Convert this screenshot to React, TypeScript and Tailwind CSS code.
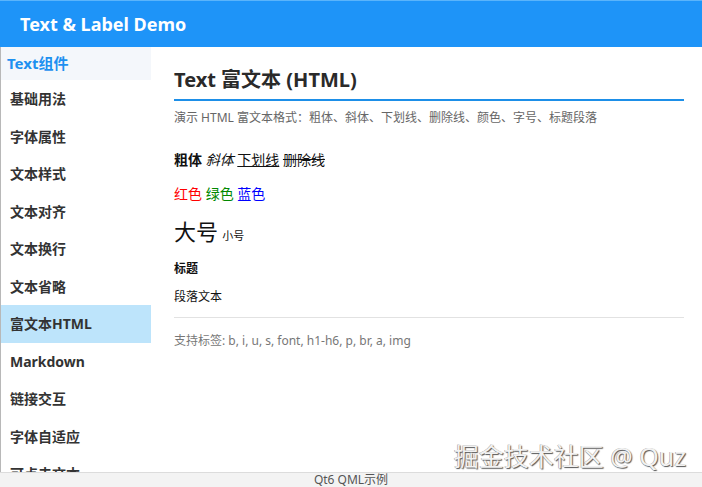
import React from "react";

const items = [
  "基础用法",
  "字体属性",
  "文本样式",
  "文本对齐",
  "文本换行",
  "文本省略",
  "富文本HTML",
  "Markdown",
  "链接交互",
  "字体自适应",
  "可点击文本",
];

export default function App() {
  return (
    <div
      className="relative w-[702px] h-[487px] flex flex-col overflow-hidden bg-white"
      style={{ fontFamily: '"Noto Sans", "Noto Sans CJK SC", sans-serif' }}
    >
      <div className="h-[47px] shrink-0 bg-[#1e94f8] border-t border-[#5ab4fb] flex items-center pl-5">
        <span className="text-white text-[18px] font-bold leading-none">Text &amp; Label Demo</span>
      </div>
      <div className="flex-1 flex min-h-0 border-l border-[#b8b8b8]">
        <div className="w-[150px] shrink-0 flex flex-col overflow-hidden">
          <div className="h-[33px] shrink-0 bg-[#f4f7fb] flex items-center pl-[6px]">
            <span className="text-[#1e90f0] text-[15px] font-bold">Text组件</span>
          </div>
          {items.map((it) => (
            <div
              key={it}
              className={`h-[37.5px] shrink-0 flex items-center pl-[9px] text-[14px] font-bold text-[#333] ${it === "富文本HTML" ? "bg-[#bde4fb]" : ""}`}
            >
              {it}
            </div>
          ))}
        </div>
        <div className="flex-1 pl-[23px] pr-[18px] pt-[19px] flex flex-col">
          <div className="text-[20px] font-bold text-[#2a2a2a] leading-[28px]">Text 富文本 (HTML)</div>
          <div className="h-[2px] bg-[#1d8fe8] mt-[5px]"></div>
          <div className="text-[12px] text-[#666] mt-[8px] leading-[18px]">
            演示 HTML 富文本格式：粗体、斜体、下划线、删除线、颜色、字号、标题段落
          </div>
          <div className="mt-[23px] text-[14px] text-[#111] leading-[20px]">
            <b>粗体</b> <i>斜体</i> <u>下划线</u> <s>删除线</s>
          </div>
          <div className="mt-[14px] text-[14px] leading-[20px]">
            <span className="text-[#f00]">红色</span> <span className="text-[#080]">绿色</span>{" "}
            <span className="text-[#00f]">蓝色</span>
          </div>
          <div className="mt-[12px] leading-[30px] text-[#111]">
            <span className="text-[22px]">大号</span> <span className="text-[11px]">小号</span>
          </div>
          <div className="mt-[9px] text-[12px] font-bold text-[#111] leading-[18px]">标题</div>
          <div className="mt-[10px] text-[12px] text-[#111] leading-[18px]">段落文本</div>
          <div className="mt-[11px] h-px bg-[#e2e2e2]"></div>
          <div className="mt-[15px] text-[12px] text-[#777] leading-[16px]">
            支持标签: b, i, u, s, font, h1-h6, p, br, a, img
          </div>
        </div>
      </div>
      <div className="h-[15px] shrink-0 bg-[#f3f3f3] border-t border-[#dcdcdc] flex items-center justify-center text-[12px] text-[#555] leading-none">
        Qt6 QML示例
      </div>
      <div className="absolute right-[16px] bottom-[18px] text-[25px] leading-none text-[#f2f2f2] [text-shadow:1px_1px_1px_#555,-0.5px_-0.5px_0.5px_#999]">
        掘金技术社区 @ Quz
      </div>
    </div>
  );
}
